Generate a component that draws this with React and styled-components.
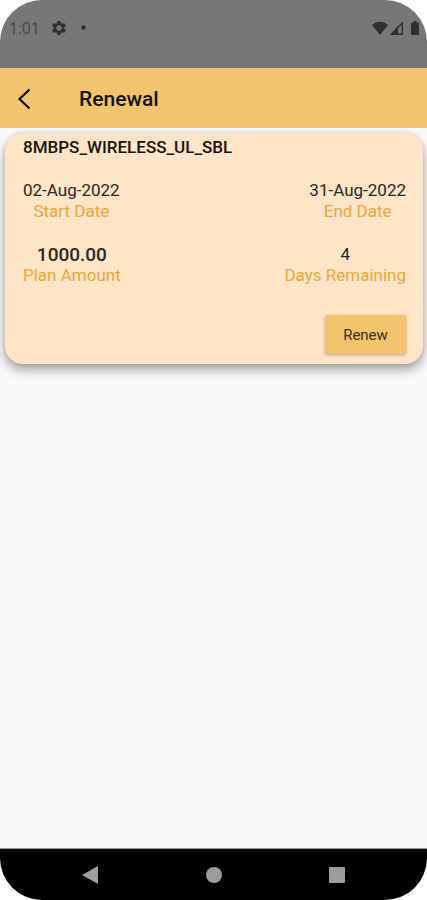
import React from "react";
import styled, { createGlobalStyle } from "styled-components";

const GlobalStyle = createGlobalStyle`
  * { box-sizing: border-box; }
  body { margin: 0; background: #fff; font-family: Roboto, sans-serif; }
  h1, h2, dl, dt, dd { margin: 0; font: inherit; }
`;

const Screen = styled.div`
  display: flex;
  flex-direction: column;
  min-height: 100vh;
  overflow: hidden;
  border-radius: 42px;
  background: #fafafa;
`;

const StatusBar = styled.div`
  display: flex;
  align-items: center;
  height: 68px;
  padding: 0 8px 13px 9px;
  background: #777;
  color: #4a4a4a;
  font-size: 16px;
`;

const ClockText = styled.span`
  padding-top: 2px;
`;

const StatusIcons = styled.div`
  display: flex;
  align-items: center;
  gap: ${(p) => p.$gap}px;
  margin-left: ${(p) => (p.$end ? "auto" : "12px")};
  color: #303030;

  svg { display: block; }
`;

const AppBar = styled.header`
  display: flex;
  align-items: center;
  gap: 39px;
  height: 60px;
  padding: 1px 8px 0;
  background: #f2c46d;
  color: #17120a;
`;

const BackButton = styled.button`
  display: grid;
  place-items: center;
  width: 32px;
  height: 40px;
  padding: 0;
  border: 0;
  background: none;
  color: inherit;
`;

const Title = styled.h1`
  && { font-size: 21px; font-weight: 500; line-height: 26px; }
`;

const Content = styled.main`
  flex: 1;
  padding: 5px 4px 0 5px;
`;

const Card = styled.section`
  display: flex;
  flex-direction: column;
  padding: 4px 17px 10px 18px;
  border-radius: 18px;
  background: #ffe4c8;
  box-shadow: 0 6px 12px rgba(0, 0, 0, 0.35), 0 0 4px rgba(0, 0, 0, 0.12);
`;

const PlanName = styled.h2`
  && {
    color: #17120c;
    font-size: 17px;
    font-weight: 500;
    line-height: 21px;
  }
`;

const Details = styled.dl`
  display: grid;
  grid-template-columns: auto auto;
  justify-content: space-between;
  row-gap: 22px;
  margin-top: 22px;
`;

const Detail = styled.div`
  display: flex;
  flex-direction: column-reverse;
  align-items: center;
  justify-self: ${(p) => (p.$end ? "end" : "start")};
`;

const Label = styled.dt`
  && {
    color: #eda637;
    font-size: 17px;
    line-height: 21px;
  }
`;

const Value = styled.dd`
  && {
    color: #30271e;
    font-size: ${(p) => (p.$strong ? 19 : 17)}px;
    font-weight: ${(p) => (p.$strong ? 500 : 400)};
    line-height: 21px;
  }
`;

const RenewButton = styled.button`
  align-self: flex-end;
  width: 81px;
  height: 39px;
  margin-top: 29px;
  padding: 0;
  border: 0;
  border-radius: 3px;
  background: #f2c46d;
  box-shadow: 0 1px 3px rgba(0, 0, 0, 0.3);
  color: #3b2f1a;
  font: 400 15px Roboto, sans-serif;
`;

const NavBar = styled.nav`
  display: grid;
  grid-template-columns: repeat(3, 123px);
  justify-content: center;
  height: 52px;
  border-top: 1px solid #999;
  background: #000;
`;

const NavButton = styled.button`
  display: grid;
  place-items: center;
  padding: 0;
  border: 0;
  background: none;
  color: #9d9d9d;
`;

const details = [
  { label: "Start Date", value: "02-Aug-2022" },
  { label: "End Date", value: "31-Aug-2022", end: true },
  { label: "Plan Amount", value: "1000.00", strong: true },
  { label: "Days Remaining", value: "4", end: true },
];

const GearIcon = () => (
  <svg width="14" height="14" viewBox="2 2 20 20" fill="currentColor" aria-hidden="true">
    <path fillRule="evenodd" d="M19.4 13c.1-.7.1-1.3 0-2l2.1-1.6c.2-.2.2-.4.1-.6l-2-3.5c-.1-.2-.4-.3-.6-.2l-2.500 1a7 7 0 0 0-1.700-1l-.4-2.700c0-.2-.2-.4-.5-.4h-4c-.3 0-.5.2-.5.4L9 5.100a7 7 0 0 0-1.700 1l-2.500-1c-.2-.1-.5 0-.6.2l-2 3.500c-.1.2-.1.5.1.6L4.500 11a8 8 0 0 0 0 2l-2.200 1.600c-.2.2-.2.4-.1.6l2 3.500c.1.2.4.3.6.2l2.500-1a7 7 0 0 0 1.700 1l.4 2.700c0 .2.2.4.5.4h4c.3 0 .5-.2.5-.4l.4-2.700a7 7 0 0 0 1.700-1l2.500 1c.2.1.5 0 .6-.2l2-3.500c.1-.2.1-.5-.1-.6zM12 15.800a3.800 3.800 0 1 1 0-7.600 3.800 3.800 0 0 1 0 7.600z" />
  </svg>
);

const DotIcon = () => (
  <svg width="5" height="5" viewBox="0 0 5 5" fill="currentColor" aria-hidden="true">
    <circle cx="2.5" cy="2.5" r="2.2" />
  </svg>
);

const WifiIcon = () => (
  <svg width="16" height="14" viewBox="0 0 16 14" fill="currentColor" aria-hidden="true">
    <path d="M0 4C4-.5 12-.5 16 4L8 14z" />
  </svg>
);

const SignalIcon = () => (
  <svg width="13" height="14" viewBox="0 0 13 14" aria-hidden="true">
    <path d="M0 14L8 5v9z" fill="currentColor" />
    <path d="M1.5 13.3L12.3 2v11.3z" fill="none" stroke="currentColor" strokeWidth="1.4" />
  </svg>
);

const BatteryIcon = () => (
  <svg width="8" height="14" viewBox="0 0 8 14" fill="currentColor" aria-hidden="true">
    <path d="M2.5 0h3v1.5H7a1 1 0 0 1 1 1V13a1 1 0 0 1-1 1H1a1 1 0 0 1-1-1V2.500a1 1 0 0 1 1-1h1.500z" />
  </svg>
);

const BackIcon = () => (
  <svg width="14" height="22" viewBox="0 0 14 22" fill="none" stroke="currentColor" strokeWidth="2.3" aria-hidden="true">
    <path d="M12.5 1.5L2.5 11l10 9.500" />
  </svg>
);

const navIcons = [
  { name: "Back", shape: <path d="M0 9L16 0v18z" /> },
  { name: "Home", shape: <circle cx="9" cy="9" r="8" /> },
  { name: "Recent apps", shape: <rect x="1" y="1" width="16" height="16" rx="1" /> },
];

export default function App() {
  return (
    <>
      <GlobalStyle />
      <Screen>
        <StatusBar>
          <ClockText>1:01</ClockText>
          <StatusIcons $gap={15}>
            <GearIcon />
            <DotIcon />
          </StatusIcons>
          <StatusIcons $end $gap={8}>
            <StatusIcons $gap={2}>
              <WifiIcon />
              <SignalIcon />
            </StatusIcons>
            <BatteryIcon />
          </StatusIcons>
        </StatusBar>
        <AppBar>
          <BackButton type="button" aria-label="Go back">
            <BackIcon />
          </BackButton>
          <Title>Renewal</Title>
        </AppBar>
        <Content>
          <Card>
            <PlanName>8MBPS_WIRELESS_UL_SBL</PlanName>
            <Details>
              {details.map((item) => (
                <Detail key={item.label} $end={item.end}>
                  <Label>{item.label}</Label>
                  <Value $strong={item.strong}>{item.value}</Value>
                </Detail>
              ))}
            </Details>
            <RenewButton type="button">Renew</RenewButton>
          </Card>
        </Content>
        <NavBar>
          {navIcons.map(({ name, shape }) => (
            <NavButton key={name} type="button" aria-label={name}>
              <svg width="18" height="18" viewBox="0 0 18 18" fill="currentColor" aria-hidden="true">
                {shape}
              </svg>
            </NavButton>
          ))}
        </NavBar>
      </Screen>
    </>
  );
}
